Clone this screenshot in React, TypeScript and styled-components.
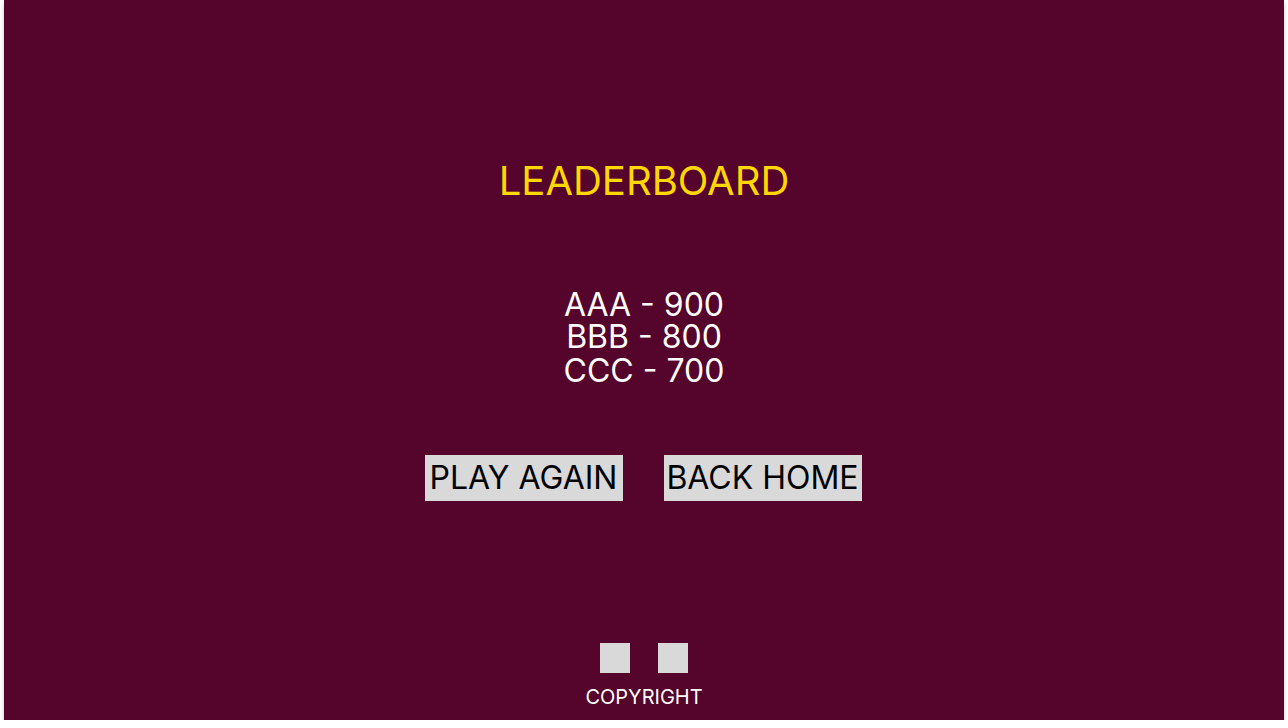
import * as React from "react";
import styled, { createGlobalStyle } from "styled-components";

const GlobalStyle = createGlobalStyle`
  html, body {
    margin: 0;
    padding: 0;
    background: #ffffff;
    font-family: "Inter", "Liberation Sans", sans-serif;
  }
`;

const scores = [
  { name: "AAA", score: 900, gap: 0 },
  { name: "BBB", score: 800, gap: 0 },
  { name: "CCC", score: 700, gap: 2 },
];

const App = () => {
  return (
    <>
      <GlobalStyle />
      <Frame>
        <Title>LEADERBOARD</Title>
        <ScoreList>
          {scores.map((s) => (
            <ScoreRow key={s.name} $gap={s.gap}>
              {s.name} - {s.score}
            </ScoreRow>
          ))}
        </ScoreList>
        <Buttons>
          <Button>PLAY AGAIN</Button>
          <Button>BACK HOME</Button>
        </Buttons>
        <Footer>
          <Socials>
            <Square />
            <Square />
          </Socials>
          <Copyright>COPYRIGHT</Copyright>
        </Footer>
      </Frame>
    </>
  );
};
export default App;

const Frame = styled.div`
  width: 1280px;
  height: 720px;
  margin-left: 4px;
  background: #55042b;
  box-shadow: 0px 4px 4px rgba(0, 0, 0, 0.25);
  display: flex;
  flex-direction: column;
  align-items: center;
  padding-top: 161px;
  box-sizing: border-box;
`;

const Title = styled.h1`
  margin: 0;
  font-size: 40px;
  line-height: 40px;
  font-weight: 400;
  color: #ffd700;
`;

const ScoreList = styled.div`
  margin-top: 88px;
  display: flex;
  flex-direction: column;
  align-items: center;
`;

const ScoreRow = styled.div<{ $gap: number }>`
  margin-top: ${(p) => p.$gap}px;
  font-size: 32px;
  line-height: 32px;
  color: #ffffff;
  white-space: pre;
`;

const Buttons = styled.div`
  margin-top: 68px;
  margin-right: 2px;
  display: flex;
  gap: 41px;
`;

const Button = styled.button`
  appearance: none;
  border: 0;
  width: 198px;
  height: 46px;
  padding: 0;
  background: #d9d9d9;
  color: #000000;
  font-family: "Inter", "Liberation Sans", sans-serif;
  font-size: 32px;
  font-weight: 400;
  line-height: 46px;
  text-align: center;
  white-space: nowrap;
  cursor: pointer;
`;

const Footer = styled.div`
  margin-top: 142px;
  display: flex;
  flex-direction: column;
  align-items: center;
  gap: 14px;
`;

const Socials = styled.div`
  display: flex;
  gap: 28px;
`;

const Square = styled.div`
  width: 30px;
  height: 30px;
  background: #d9d9d9;
`;

const Copyright = styled.div`
  font-size: 20px;
  line-height: 20px;
  color: #ffffff;
`;
